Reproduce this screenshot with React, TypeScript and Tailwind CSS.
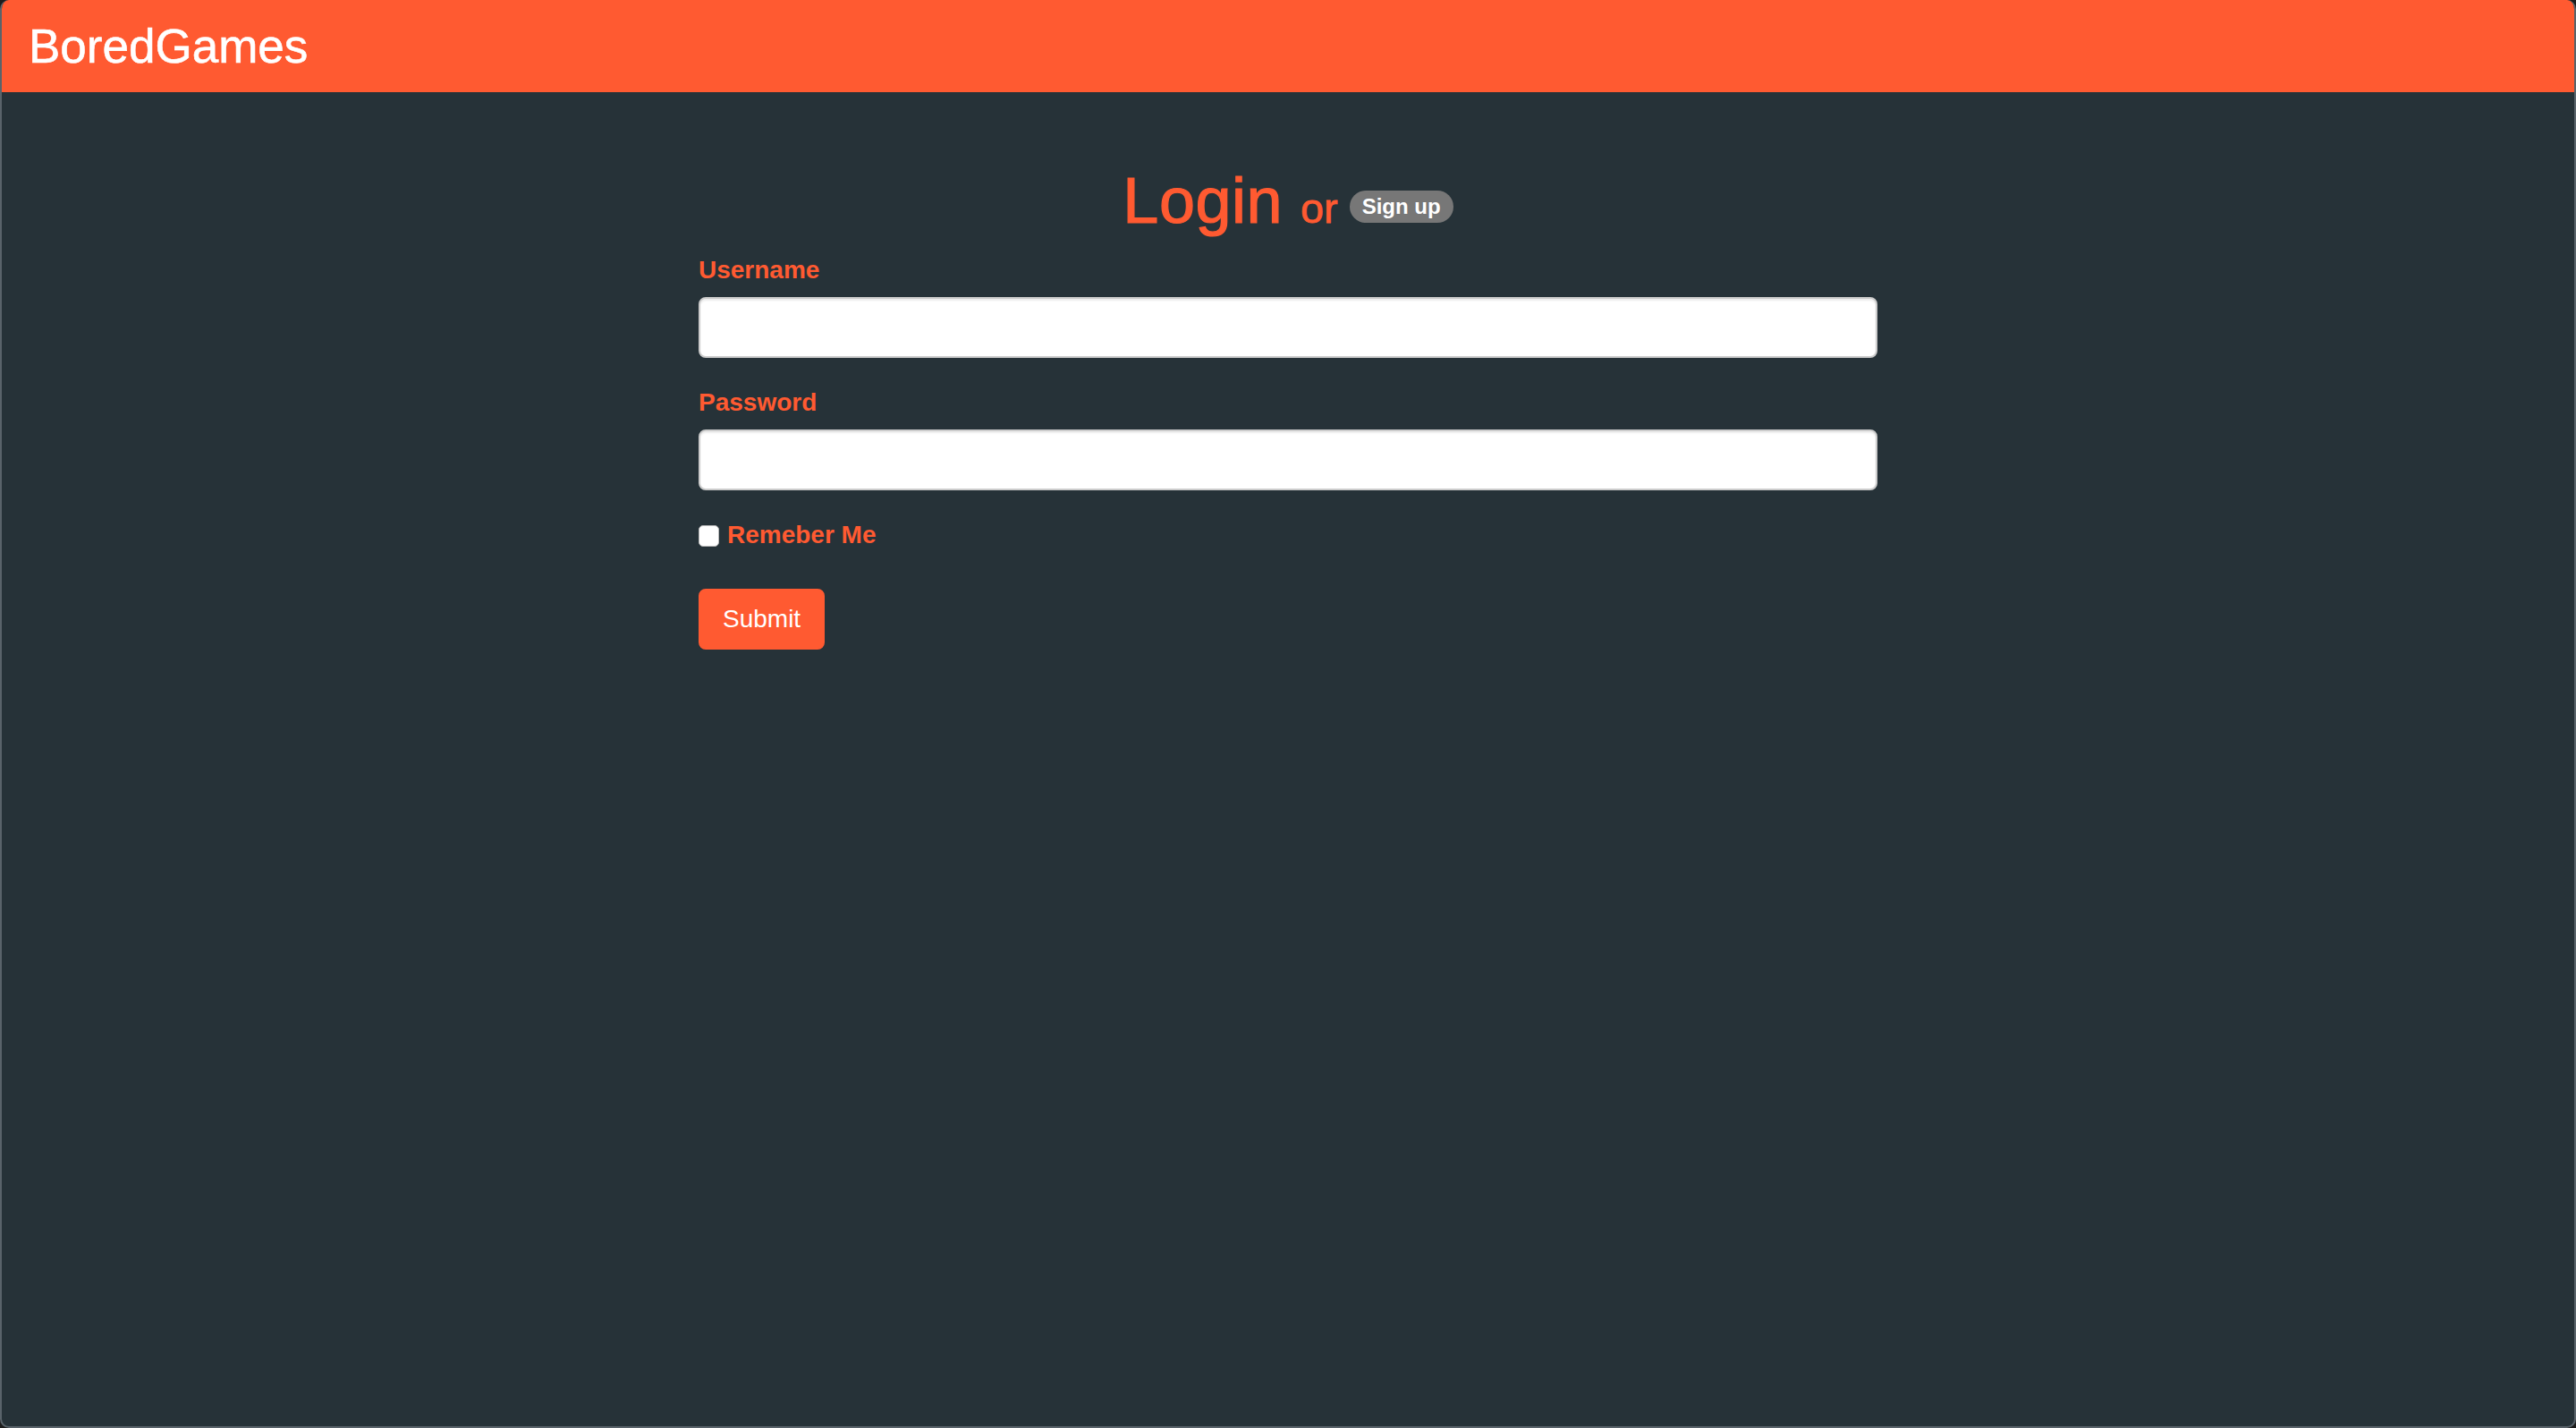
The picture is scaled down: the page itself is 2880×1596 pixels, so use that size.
import React from "react";

const orange = "text-[#ff5a31]";

function Field({ label, type }: { label: string; type: string }) {
  return (
    <div className="mb-[30px]">
      <label className={`block mb-[10px] text-[28px] leading-[40px] font-bold ${orange}`}>{label}</label>
      <input
        type={type}
        className="block w-full h-[68px] px-[24px] rounded-[8px] border-2 border-[#cccccc] bg-white text-[28px] shadow-[inset_0_2px_2px_rgba(0,0,0,0.075)] outline-none"
      />
    </div>
  );
}

export default function App() {
  return (
    <div className="w-[2880px] h-[1596px] bg-[#1c1c1c] font-['Liberation_Sans',Arial,sans-serif]">
      <div className="h-full flex flex-col rounded-[10px] border-x-2 border-b-2 border-[#59636a] bg-[#263238] overflow-hidden">
        {/* Navbar */}
        <header className="h-[103px] shrink-0 flex items-center bg-[#ff5a31] pl-[30px]">
          <span className="text-[53px] leading-none text-white [-webkit-text-stroke:0.6px_#ffffff]">BoredGames</span>
        </header>

        {/* Login form */}
        <main className="w-[1318px] mx-auto">
          <h1 className={`mt-[82px] mb-[9px] text-center text-[72px] leading-[79px] ${orange}`}>
            <span className="[-webkit-text-stroke:1.2px_#ff5a31] tracking-[0.5px]">Login</span>{" "}
            <small className="text-[46.8px] [-webkit-text-stroke:0.8px_#ff5a31]">
              or{" "}
              <span className="inline-block align-[10px] rounded-[20px] bg-[#777777] px-[14px] py-[6px] text-[24px] leading-none font-bold text-white [-webkit-text-stroke:0px]">
                Sign up
              </span>
            </small>
          </h1>

          <Field label="Username" type="text" />
          <Field label="Password" type="password" />

          <label className="flex items-center gap-[9px] h-[40px]">
            <input
              type="checkbox"
              className="appearance-none w-[23px] h-[24px] mt-[2px] rounded-[5px] border border-[#b8b8b8] bg-white"
            />
            <span className={`text-[28px] leading-[40px] font-bold ${orange}`}>Remeber Me</span>
          </label>

          <button className="mt-[40px] h-[68px] px-[25px] rounded-[8px] border-2 border-[#ff5a31] bg-[#ff5a31] text-[28px] leading-[40px] text-white">
            Submit
          </button>
        </main>
      </div>
    </div>
  );
}
